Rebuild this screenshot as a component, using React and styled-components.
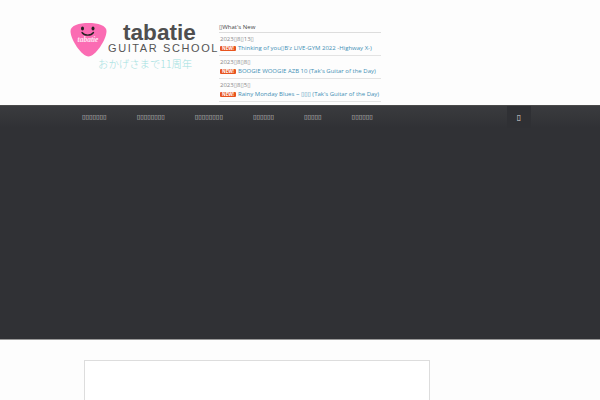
import React from 'react'
import styled, { createGlobalStyle } from 'styled-components'

const TOFU = '\u25AF'
const tofu = n => TOFU.repeat(n)

const news = [
  { date: `2023${TOFU}8${TOFU}13${TOFU}`, title: `Thinking of you${TOFU}B'z LIVE-GYM 2022 -Highway X-)` },
  { date: `2023${TOFU}8${TOFU}8${TOFU}`, title: `BOOGIE WOOGIE AZB 10 (Tak's Guitar of the Day)` },
  { date: `2023${TOFU}8${TOFU}5${TOFU}`, title: `Rainy Monday Blues ~ ${tofu(3)} (Tak's Guitar of the Day)` },
]

const menu = [7, 8, 8, 6, 5, 6]

const Global = createGlobalStyle`
  html, body {
    margin: 0;
    padding: 0;
    height: 400px;
    background: #fdfdfd;
    font-family: "Open Sans", "DejaVu Sans", sans-serif;
    overflow: hidden;
  }
`

const Logo = () => (
  <LogoWrap>
    <LogoRow>
      <Pick viewBox="0 0 37 35">
        <path d="M0.5 9C0.5 3.5 9 1 18.5 1S36.5 3.5 36.5 9C36.5 18 25 34.5 18.5 34.5S0.5 18 0.5 9z" fill="#fb6cb3" />
        <ellipse cx="12.5" cy="6.5" rx="1.5" ry="1.9" fill="#222" />
        <ellipse cx="23" cy="6.5" rx="1.5" ry="1.9" fill="#222" />
        <path d="M12 10.5c2.5 3.5 9 3.5 11.5 0" stroke="#222" strokeWidth="1.3" fill="none" strokeLinecap="round" />
        <text x="18" y="19.5" fontSize="7.5" fontStyle="italic" fontWeight="700" textAnchor="middle" fill="#ffe6f3" fontFamily="Liberation Serif">tabatie</text>
      </Pick>
      <Brand>
        <BrandName>tabatie</BrandName>
        <BrandSub>GUITAR SCHOOL</BrandSub>
      </Brand>
    </LogoRow>
    <Thanks>おかげさまで11周年</Thanks>
  </LogoWrap>
)

export default function App() {
  return (
    <>
      <Global />
      <Header>
        <Logo />
        <News>
          <NewsTitle>{TOFU}What's New</NewsTitle>
          {news.map(n => (
            <NewsItem key={n.date}>
              <NewsDate>{n.date}</NewsDate>
              <NewsLine><Badge>NEW!</Badge>{n.title}</NewsLine>
            </NewsItem>
          ))}
        </News>
      </Header>
      <Nav>
        <NavInner>
          {menu.map((n, i) => <NavItem key={i}>{tofu(n)}</NavItem>)}
        </NavInner>
        <SearchBtn>{TOFU}</SearchBtn>
      </Nav>
      <Hero />
      <Main>
        <Panel />
      </Main>
    </>
  )
}

const Header = styled.header`
  height: 105px;
  display: flex;
  padding-left: 70px;
  box-sizing: border-box;
  background: #fdfdfd;
`

const LogoWrap = styled.div`
  width: 149px;
  flex-shrink: 0;
  display: flex;
  flex-direction: column;
  padding-top: 22px;
  box-sizing: border-box;
`

const LogoRow = styled.div`
  display: flex;
  gap: 1px;
`

const Pick = styled.svg`
  width: 37px;
  height: 35px;
  flex-shrink: 0;
`

const Brand = styled.div`
  width: 110px;
  color: #4f4f4f;
`

const BrandName = styled.div`
  font-family: "Liberation Sans", sans-serif;
  font-size: 22.6px;
  font-weight: 700;
  line-height: 21px;
  padding-left: 15px;
`

const BrandSub = styled.div`
  font-family: "Liberation Sans", sans-serif;
  font-size: 11px;
  line-height: 11px;
  letter-spacing: 1.6px;
  white-space: nowrap;
  color: #555;
`

const Thanks = styled.div`
  margin: 0 0 0 28px;
  font-family: "Noto Sans CJK JP", sans-serif;
  font-weight: 300;
  font-size: 10.4px;
  line-height: 13px;
  color: #a2e0e0;
  white-space: nowrap;
`

const News = styled.section`
  width: 162px;
  padding-top: 22px;
  font-size: 6px;
`

const NewsTitle = styled.div`
  height: 10px;
  line-height: 10px;
  color: #444;
  border-bottom: 1px solid #ddd;
`

const NewsItem = styled.div`
  height: 20px;
  padding: 2px 0 0 1px;
  border-bottom: 1px solid #e3e3e3;
  white-space: nowrap;
`

const NewsDate = styled.div`
  line-height: 9px;
  color: #888;
`

const NewsLine = styled.div`
  line-height: 8px;
  color: #3f8fb5;
  display: flex;
  align-items: center;
`

const Badge = styled.span`
  background: #e8541e;
  color: #fff;
  font-size: 4.5px;
  font-weight: 700;
  width: 16px;
  height: 5px;
  line-height: 5px;
  text-align: center;
  margin-right: 2px;
  border-radius: 1px;
`

const Nav = styled.nav`
  height: 22px;
  display: flex;
  justify-content: space-between;
  background: linear-gradient(#3a3b3e, #303135);
  border-top: 1px solid #4a4a4a;
`

const NavInner = styled.div`
  display: flex;
  padding-left: 82px;
  gap: 30px;
`

const NavItem = styled.div`
  color: #ccc;
  font-size: 6.4px;
  line-height: 22px;
  white-space: nowrap;
`

const SearchBtn = styled.div`
  width: 24px;
  margin-right: 69px;
  text-align: center;
  color: #ddd;
  font-size: 8px;
  line-height: 22px;
  background: #2f3034;
`

const Hero = styled.div`
  height: 211px;
  background: #303135;
  border-bottom: 1px solid #999;
`

const Main = styled.main`
  padding: 20px 0 0 84px;
  background: #fdfdfd;
`

const Panel = styled.div`
  width: 344px;
  height: 39px;
  border: 1px solid #ddd;
  border-bottom: 0;
  background: #fff;
`
